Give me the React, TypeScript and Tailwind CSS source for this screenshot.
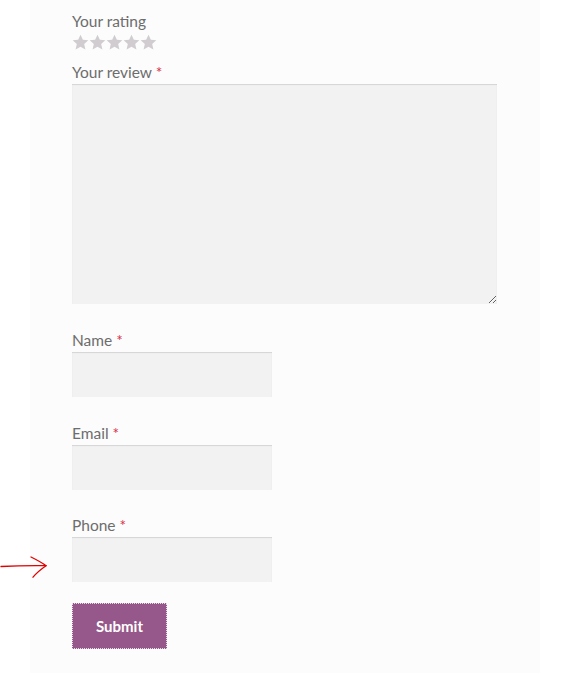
const font = "font-['Lato','Liberation_Sans',sans-serif]";

function Star() {
  return (
    <svg viewBox="0 0 24 24" className="h-[17px] w-[17px]" fill="#d0ccd0">
      <path d="M12 1l3.3 7.1 7.7.8-5.8 5.2 1.7 7.7L12 17.9l-6.9 3.9 1.7-7.7L1 8.9l7.7-.8z" />
    </svg>
  );
}

function Field({ label }: { label: string }) {
  return (
    <div className="flex flex-col">
      <label className="h-6 leading-6">
        {label} <span className="text-[#d9304a]">*</span>
      </label>
      <input
        type="text"
        className="h-[45px] w-[200px] bg-[#f2f2f2] shadow-[inset_0_1px_1px_rgba(0,0,0,0.125)] outline-none"
      />
    </div>
  );
}

export default function App() {
  return (
    <div className={`relative min-h-[673px] w-[573px] bg-white ${font} text-[15.5px] text-[#6d6d6d]`}>
      <svg
        viewBox="0 0 50 30"
        className="absolute left-0 top-[553px] h-[30px] w-[50px]"
        fill="none"
        stroke="#e00000"
        strokeWidth="1.3"
        strokeLinecap="round"
      >
        <path d="M1 13.5c12-.6 30-1 45-.8" />
        <path d="M31 4c6 3 11 5.5 15 8.7-5 3.5-9.5 7-13 11.5" />
      </svg>

      <div className="ml-[30px] w-[510px] bg-[#fcfcfc] pl-[42px] pt-[9px] pb-[24px]">
        <label className="block h-6 leading-6">Your rating</label>
        <div className="mt-[1px] flex h-[17px]">
          {[0, 1, 2, 3, 4].map((i) => (
            <Star key={i} />
          ))}
        </div>
        <label className="mt-[9px] block h-6 leading-6">
          Your review <span className="text-[#d9304a]">*</span>
        </label>
        <textarea className="block h-[220px] w-[425px] bg-[#f2f2f2] shadow-[inset_0_1px_1px_rgba(0,0,0,0.125)] outline-none" />

        <div className="mt-[24px] flex flex-col gap-[23.5px]">
          <Field label="Name" />
          <Field label="Email" />
          <Field label="Phone" />
        </div>

        <button
          type="button"
          className="mt-[21px] h-[46px] w-[95px] bg-[#96588a] text-[15px] font-bold text-white outline-1 outline-dotted outline-offset-[-1px] outline-[#e8dce6]"
        >
          Submit
        </button>
      </div>
    </div>
  );
}
